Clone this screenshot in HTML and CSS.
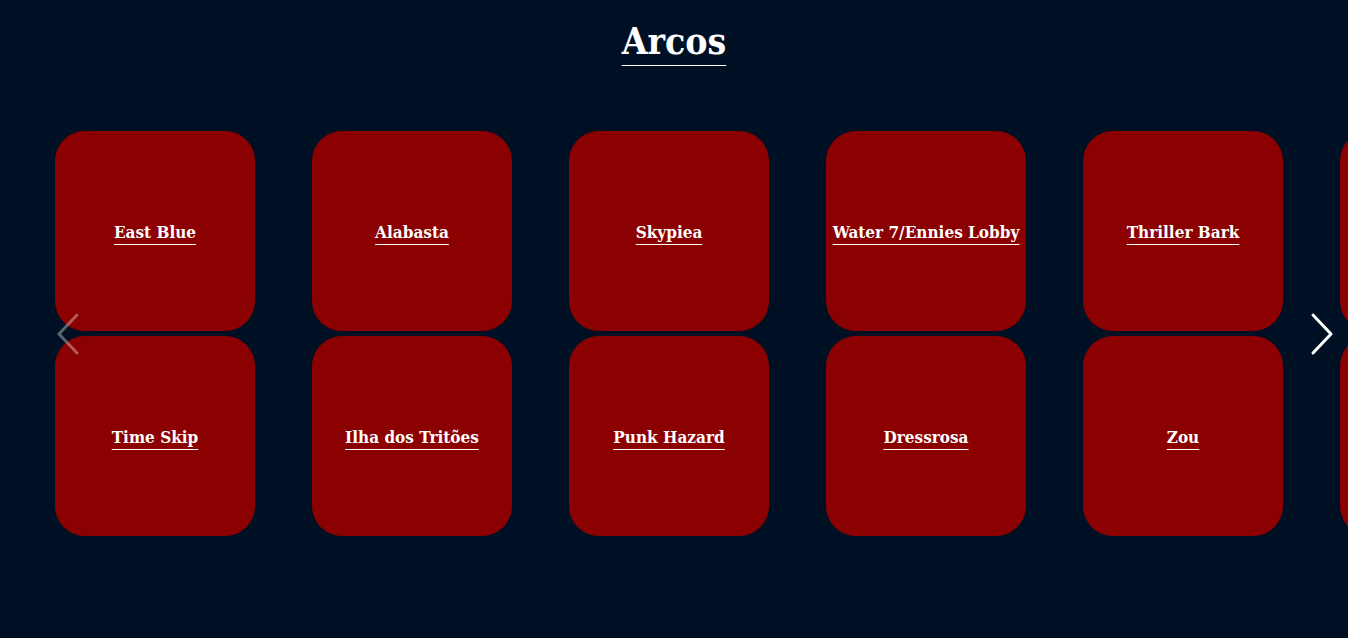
FILE: index.html
```html
<!DOCTYPE html>
<html lang="pt">
<head>
<meta charset="utf-8">
<title>Arcos</title>
<link rel="stylesheet" href="styles.css">
</head>
<body>
<main class="page">
  <h1 class="title"><a href="#">Arcos</a></h1>
  <section class="slider">
    <div class="track">
      <div class="col">
        <a class="card" href="#"><span>East Blue</span></a>
        <a class="card" href="#"><span>Time Skip</span></a>
      </div>
      <div class="col">
        <a class="card" href="#"><span>Alabasta</span></a>
        <a class="card" href="#"><span>Ilha dos Tritões</span></a>
      </div>
      <div class="col">
        <a class="card" href="#"><span>Skypiea</span></a>
        <a class="card" href="#"><span>Punk Hazard</span></a>
      </div>
      <div class="col">
        <a class="card" href="#"><span>Water 7/Ennies Lobby</span></a>
        <a class="card" href="#"><span>Dressrosa</span></a>
      </div>
      <div class="col">
        <a class="card" href="#"><span>Thriller Bark</span></a>
        <a class="card" href="#"><span>Zou</span></a>
      </div>
      <div class="col" aria-hidden="true">
        <a class="card" href="#"></a>
        <a class="card" href="#"></a>
      </div>
    </div>
    <button class="nav nav-prev" aria-label="Anterior">
      <svg viewBox="0 0 27 44" width="27" height="44"><path d="M22 3 L4 22 L22 41" fill="none" stroke="currentColor" stroke-width="3" stroke-linecap="round" stroke-linejoin="round"/></svg>
    </button>
    <button class="nav nav-next" aria-label="Próximo">
      <svg viewBox="0 0 27 44" width="27" height="44"><path d="M5 3 L23 22 L5 41" fill="none" stroke="currentColor" stroke-width="3" stroke-linecap="round" stroke-linejoin="round"/></svg>
    </button>
  </section>
</main>
</body>
</html>
```
FILE: styles.css
```css
html, body {
  margin: 0;
  padding: 0;
  background: #001024;
  height: 100%;
}
body {
  font-family: "DejaVu Serif Condensed", "DejaVu Serif", serif;
  color: #fff;
  overflow: hidden;
}
.page {
  display: flex;
  flex-direction: column;
  align-items: center;
}
.title {
  margin: 18px 0 0;
  font-size: 37px;
  font-weight: bold;
  line-height: 46px;
}
.title a {
  color: #fff;
  text-decoration: underline;
  text-decoration-thickness: 1px;
  text-underline-offset: 11px;
}
.slider {
  position: relative;
  width: 100%;
  margin-top: 67px;
  overflow: hidden;
}
.track {
  display: flex;
  gap: 57px;
  padding-left: 55px;
}
.col {
  display: flex;
  flex-direction: column;
  gap: 5px;
  flex: 0 0 200px;
}
.card {
  width: 200px;
  height: 200px;
  border-radius: 30px;
  background: #8b0000;
  display: flex;
  align-items: center;
  justify-content: center;
  color: #fff;
  font-size: 17px;
  font-weight: bold;
  text-decoration: underline;
  text-decoration-thickness: 1px;
  text-underline-offset: 6px;
  white-space: nowrap;
}
.card span {
  padding-top: 2px;
}
.nav {
  position: absolute;
  top: 181px;
  width: 27px;
  height: 44px;
  padding: 0;
  border: 0;
  background: none;
  color: #fff;
  display: flex;
}
.nav-prev {
  left: 55px;
  opacity: 0.35;
}
.nav-next {
  left: 1308px;
}
```
